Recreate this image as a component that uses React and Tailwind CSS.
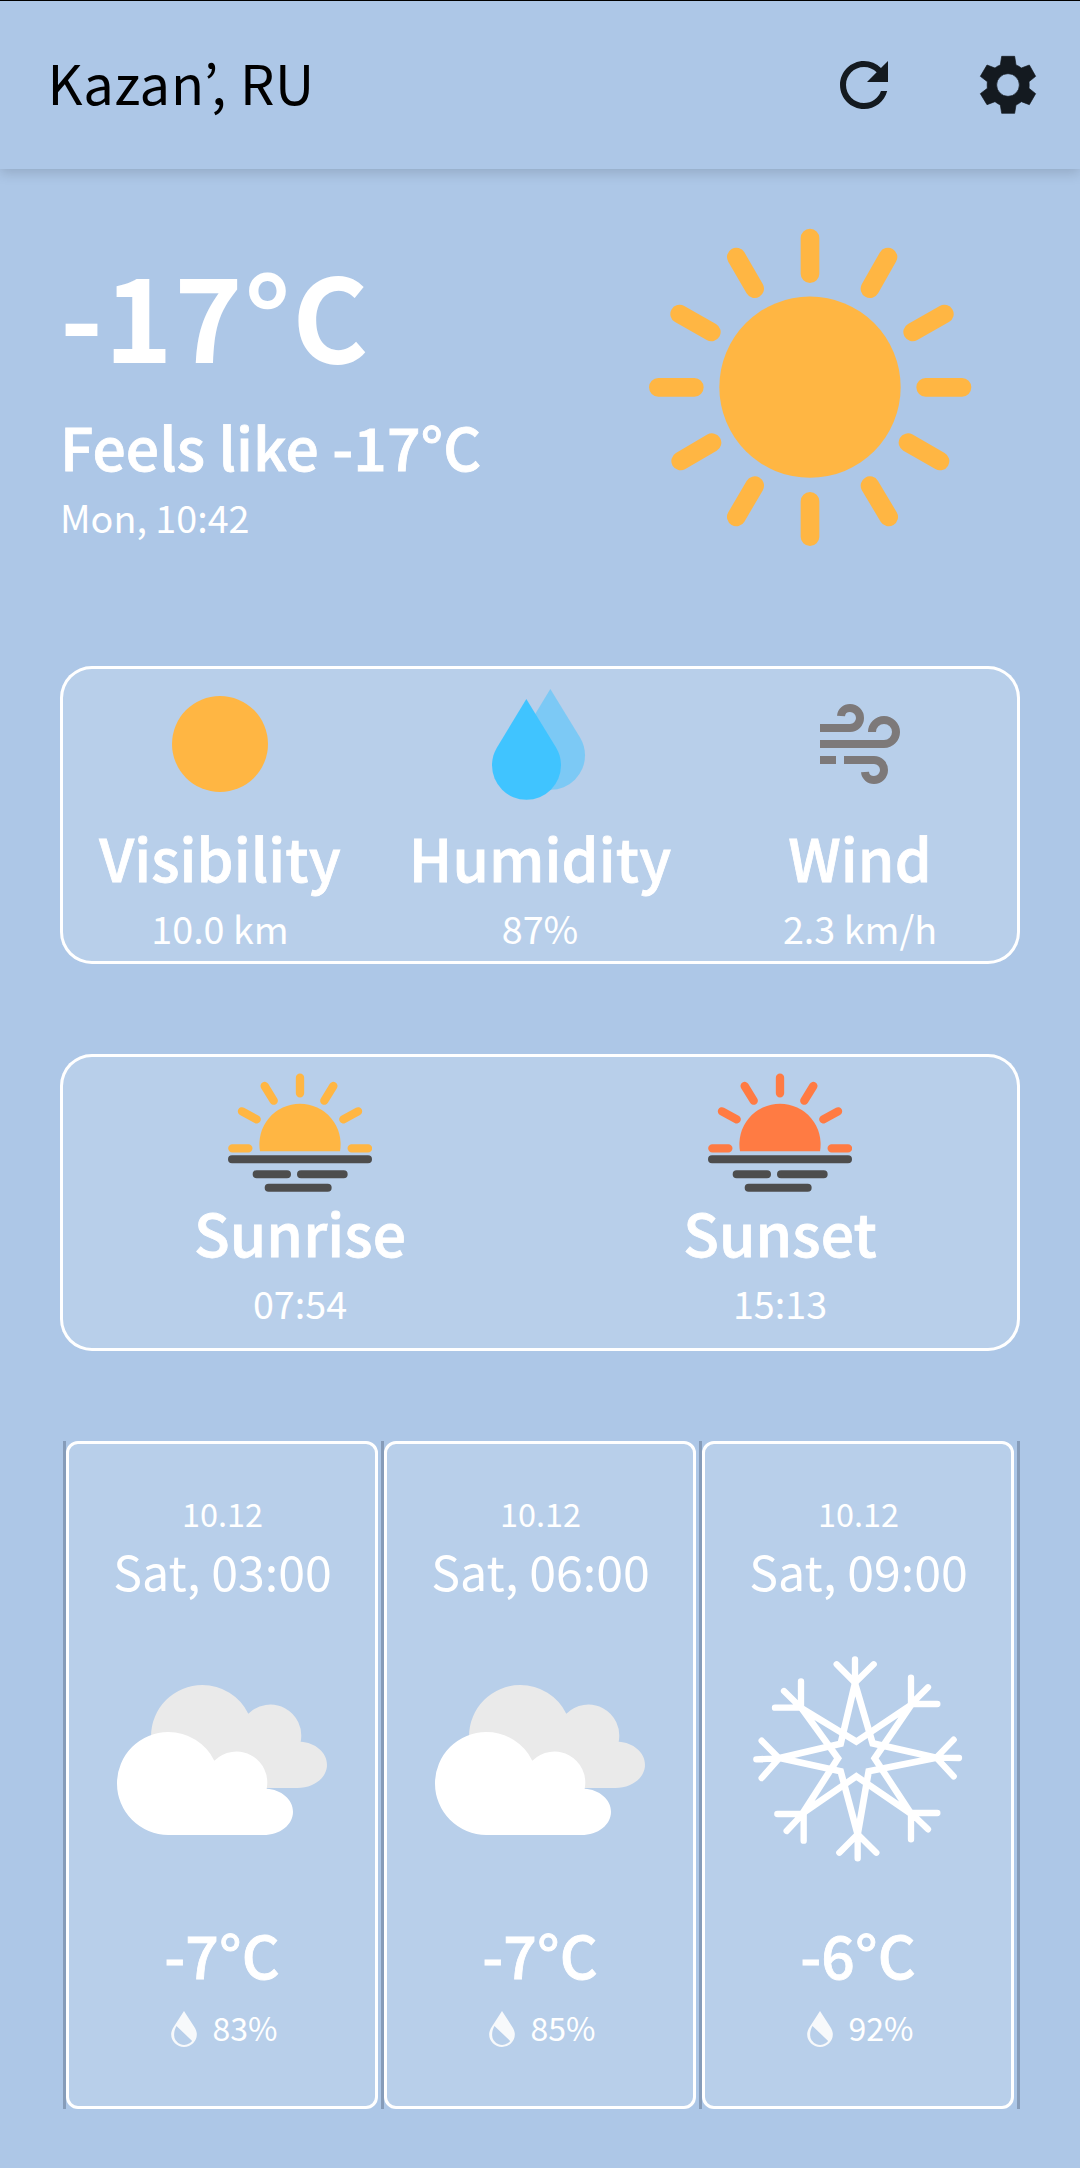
import React from "react";
import { MdRefresh } from "react-icons/md";

const SUN = "#ffb643";

function GearIcon() {
  return (
    <svg className="size-[72px]" viewBox="576 147 216 216" fill="#141a20" stroke="#141a20" strokeWidth="2" strokeLinejoin="round">
      <path
        fillRule="evenodd"
        d="M665 169H704L708 195Q717 198 724 204L748 195L767 229L747 245Q748 255 747 265L767 281L748 314L724 305Q717 311 708 315L704 340H665L661 315Q652 311 645 305L621 314L601 281L622 265Q621 255 622 245L601 229L621 195L645 204Q652 198 661 195ZM684 221A34 34 0 1 0 684 289A34 34 0 1 0 684 221Z"
      />
    </svg>
  );
}

function SunIcon() {
  return (
    <svg className="h-[370px] w-[380px]" viewBox="0 0 1140 1110" fill={SUN}>
      <circle cx="570" cy="561.5" r="272" />
      <path
        fill="none"
        stroke={SUN}
        strokeWidth="56"
        strokeLinecap="round"
        d="M570 114V221M804 171L750 266M973 342L878 396M1026 562H917M960 783L864 728M806 951L750 857M570 1010V904M349 951L404 857M182 783L276 728M115 562H223M179 342L274 396M349 171L404 266"
      />
    </svg>
  );
}

function VisibilityIcon() {
  return <div className="size-24 rounded-full bg-[#ffb643]" />;
}

function HumidityIcon() {
  const drop = "M1429 133L1340 280C1331 295 1326 313 1326 332A103.5 103.5 0 0 0 1533 332C1533 313 1528 295 1519 280Z";
  return (
    <svg className="mt-0.5 h-[111px] w-24" viewBox="1326 103 288 333" fill="#40c4ff">
      <path d={drop} transform="translate(72 -30)" opacity="0.5" />
      <path d={drop} />
    </svg>
  );
}

function WindIcon() {
  return (
    <svg className="size-20" viewBox="840 147 240 240" fill="none" stroke="#7d7979" strokeWidth="24">
      <path d="M840 219H930A30 30 0 0 0 930 159A27 26 0 0 0 903 183" />
      <path d="M840 267H1032A36 36 0 1 0 996 231" />
      <path d="M840 315H888M912 315H1002A30 30 0 0 1 1002 375A27 26 0 0 1 975 351" />
    </svg>
  );
}

function HorizonSunIcon({ color }) {
  return (
    <svg className="h-[119px] w-36" viewBox="534 97 432 357" fill={color} strokeLinecap="round">
      <path d="M630 332A121.8 121.8 0 0 1 750 189A121.8 121.8 0 0 1 870 332Z" />
      <path
        fill="none"
        stroke={color}
        strokeWidth="25"
        d="M750 111V158M850 136L823 180M924 212L880 236M954 323H905M547 323H595M576 212L620 236M644 136L671 180"
      />
      <path fill="none" stroke="#4d4d4d" strokeWidth="24" d="M546 356H954M620 401H711M753 401H881M656 441H833" />
    </svg>
  );
}

function CloudsIcon() {
  const cloud =
    "M355 1215A154 154.5 0 0 1 201 1060A154 154 0 0 1 355 906A154 154 0 0 1 493 992A93 93 0 0 1 650 1076C693 1078 729 1108 729 1145C729 1184 690 1215 640 1215Z";
  return (
    <svg className="mt-0.5 h-[150px] w-[210px]" viewBox="201 765 630 450">
      <path d={cloud} transform="translate(102 -141)" fill="#eaeaea" />
      <path d={cloud} fill="#fff" />
    </svg>
  );
}

function SnowflakeIcon() {
  return (
    <svg className="h-[206px] w-[210px]" viewBox="188 680 630 618" fill="none" stroke="#fff" strokeWidth="20">
      <path d="M494 762L547 942L738 985L535 1026L502 1215L451 1026L268 986L451 943Z" />
      <path d="M662 827L553 987L662 1153L498 1041L337 1152L443 987L334 837L498 937Z" />
      <path
        strokeWidth="19"
        strokeLinecap="round"
        strokeLinejoin="round"
        d="M494 760V690M439 705L494 760L550 705M662 825L713 774M662 745V824H741M740 985L806 986M790 931L738 985L790 1041M662 1151L713 1200M741 1151H662V1230M502 1215V1287M447 1270L502 1215L558 1270M338 1153L289 1205M261 1154H340V1234M265 987L198 990M214 934L266 987L214 1046M332 835L281 785M332 756V835H254"
      />
    </svg>
  );
}

function DropletIcon() {
  return (
    <svg className="mt-[3px] -ml-px size-9" viewBox="346.5 452 108 108" fill="#f7f9fb">
      <path
        fillRule="evenodd"
        d="M400.5 452L370 499C365 507 362 514 362 522A38.5 38 0 0 0 439 522C439 514 436 507 431 499ZM378 497L425 542A30 29 0 0 1 371 522C371 512 374 504 378 497Z"
      />
    </svg>
  );
}

function Title({ children }) {
  return (
    <div className="h-[70px] text-[58.8px] leading-[72px] font-medium tracking-[0.1px] [-webkit-text-stroke:0.8px_white]">
      {children}
    </div>
  );
}

function Stat({ icon, slot, title, value }) {
  return (
    <div className="flex flex-1 flex-col items-center">
      <div className={`flex items-center justify-center ${slot}`}>{icon}</div>
      <Title>{title}</Title>
      <div className="mt-[17px] h-10 text-[37.7px] leading-10">{value}</div>
    </div>
  );
}

const hours = [
  { date: "10.12", time: "Sat, 03:00", icon: <CloudsIcon />, temp: "-7°C", humidity: "83%" },
  { date: "10.12", time: "Sat, 06:00", icon: <CloudsIcon />, temp: "-7°C", humidity: "85%" },
  { date: "10.12", time: "Sat, 09:00", icon: <SnowflakeIcon />, temp: "-6°C", humidity: "92%" },
];

function HourCard({ date, time, icon, temp, humidity }) {
  return (
    <div className="flex flex-1 border-l-3 border-[#869cb9] pr-[3px]">
      <div className="flex flex-1 flex-col items-center rounded-[12px] border-3 border-white bg-[#b8cfea] pt-[49px]">
        <div className="h-10 pl-px text-[32.4px] leading-10">{date}</div>
        <div className="mt-[7px] h-[60px] pl-px text-[48.3px] leading-[60px]">{time}</div>
        <div className="flex h-[318px] items-center">{icon}</div>
        <Title>{temp}</Title>
        <div className="mt-[19px] flex h-10 items-center gap-[11px] text-[32px] leading-10">
          <DropletIcon />
          <span>{humidity}</span>
        </div>
      </div>
    </div>
  );
}

export default function App() {
  return (
    <div className="h-[2168px] w-[1080px] overflow-hidden bg-[#adc7e7] font-['Noto_Sans_CJK_JP',sans-serif] whitespace-nowrap text-white">
      <header className="relative flex h-[169px] items-center justify-between border-t border-black bg-[#adc7e7] pr-9 pl-[47.5px] shadow-[0_4px_12px_rgba(0,0,0,0.15)]">
        <h1 className="h-[60px] -translate-y-[3px] text-[54.3px] leading-[60px] font-normal tracking-[0.7px] text-black">
          Kazan’, RU
        </h1>
        <div className="flex gap-[72px] text-[#141a20]">
          <button aria-label="Refresh">
            <MdRefresh className="size-[72px]" />
          </button>
          <button aria-label="Settings">
            <GearIcon />
          </button>
        </div>
      </header>

      <main className="flex flex-col px-[60px]">
        <section className="flex h-[497px] justify-between">
          <div className="pt-[83px]">
            <div className="h-[120px] text-[116px] leading-[120px] font-bold tracking-[1.4px]">-17°C</div>
            <div className="mt-[38px]">
              <Title>Feels like -17°C</Title>
            </div>
            <div className="mt-[17px] h-10 text-[37.7px] leading-10">Mon, 10:42</div>
          </div>
          <div className="mr-5 pt-[31px]">
            <SunIcon />
          </div>
        </section>

        <section className="flex h-[298px] rounded-[32px] bg-[#b8cfea] ring-3 ring-white ring-inset">
          <Stat slot="h-[155px]" icon={<VisibilityIcon />} title="Visibility" value="10.0 km" />
          <Stat slot="h-[155px]" icon={<HumidityIcon />} title="Humidity" value="87%" />
          <Stat slot="h-[155px]" icon={<WindIcon />} title="Wind" value="2.3 km/h" />
        </section>

        <section className="mt-[90px] flex h-[297px] rounded-[32px] bg-[#b8cfea] ring-3 ring-white ring-inset">
          <Stat slot="h-[142px] pt-[14px]" icon={<HorizonSunIcon color={SUN} />} title="Sunrise" value="07:54" />
          <Stat slot="h-[142px] pt-[14px]" icon={<HorizonSunIcon color="#ff7b43" />} title="Sunset" value="15:13" />
        </section>

        <section className="mt-[90px] flex h-[668px] border-r-3 border-[#869cb9] pl-[3px]">
          {hours.map((hour) => (
            <HourCard key={hour.time} {...hour} />
          ))}
        </section>
      </main>
    </div>
  );
}
